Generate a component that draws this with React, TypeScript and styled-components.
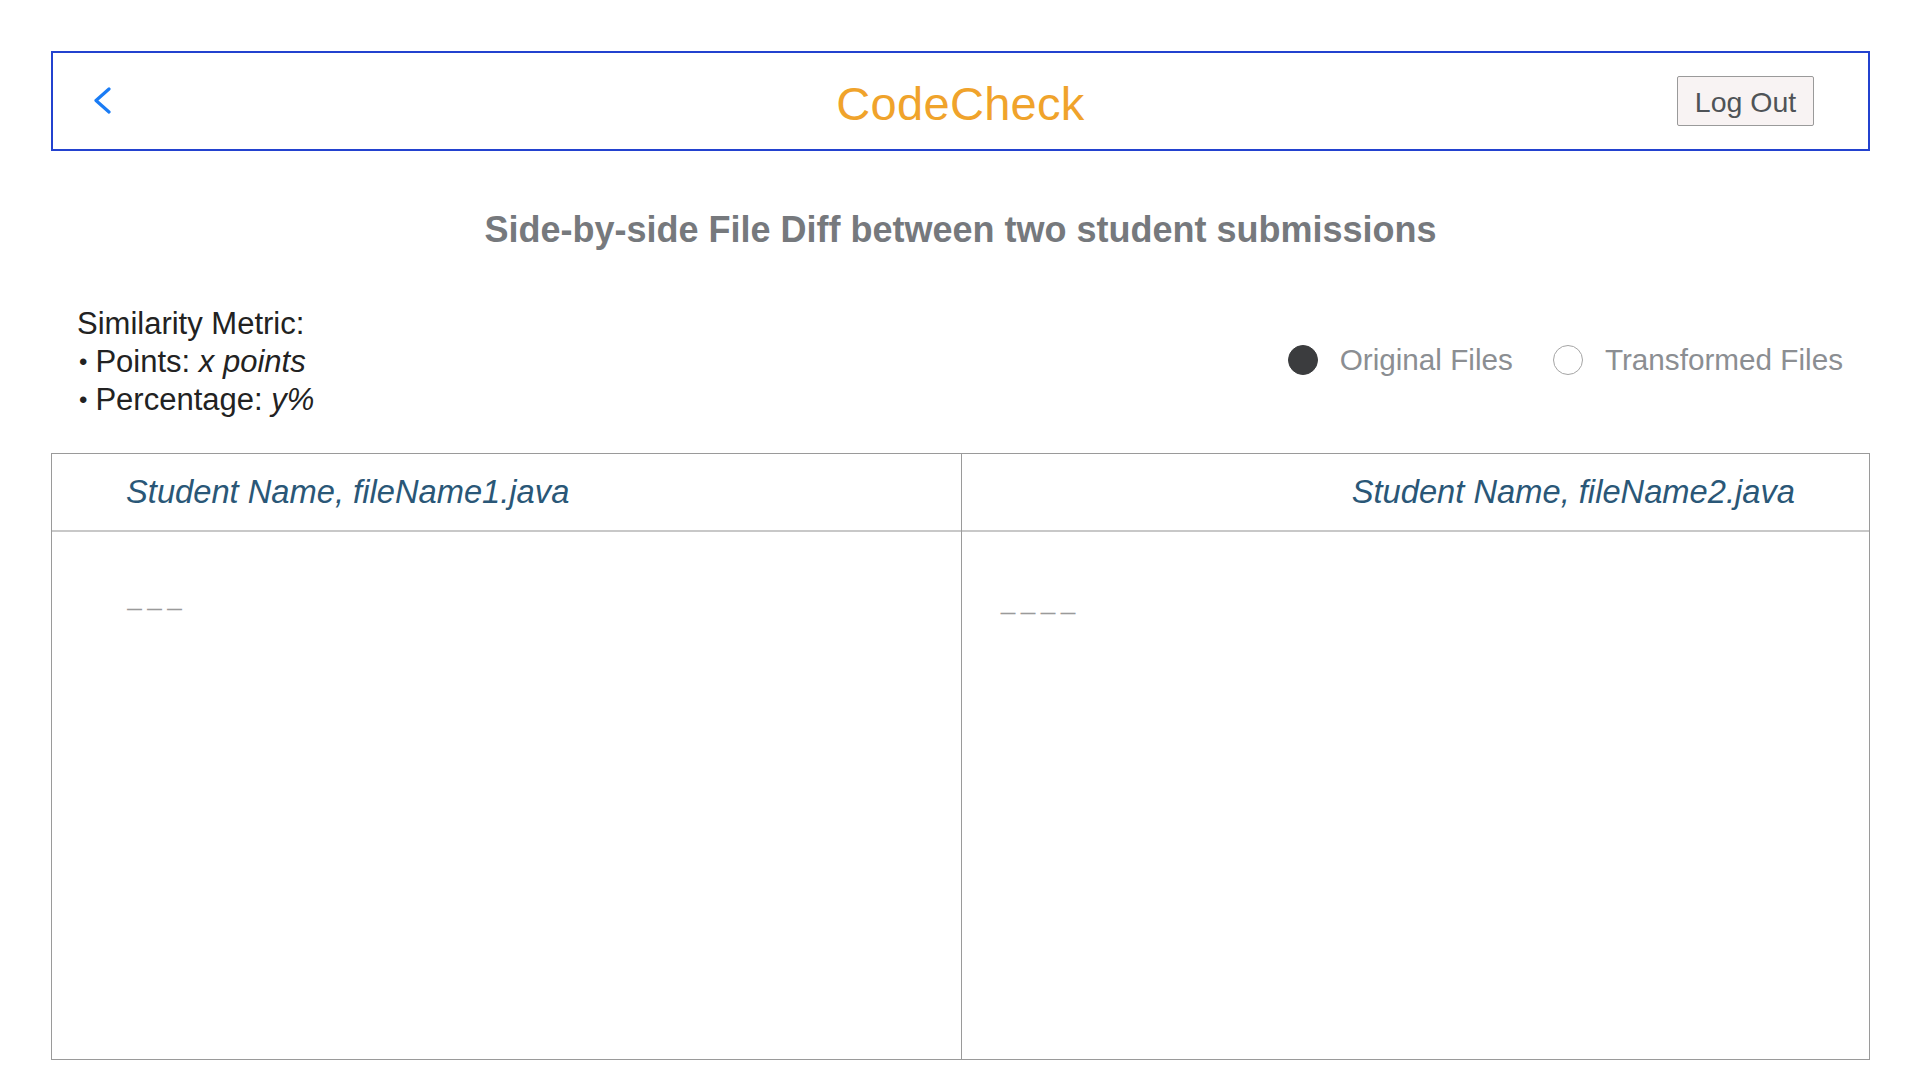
import React from "react";
import styled, { createGlobalStyle } from "styled-components";

const GlobalStyle = createGlobalStyle`
  html, body {
    margin: 0;
    padding: 0;
    background: #ffffff;
    font-family: "Liberation Sans", Arial, Helvetica, sans-serif;
  }
  * { box-sizing: border-box; }
`;

const Page = styled.div`
  width: 1920px;
  height: 1080px;
  padding: 51px 50px 0 51px;
  display: flex;
  flex-direction: column;
  overflow: hidden;
`;

const TopBar = styled.header`
  height: 100px;
  border: 2px solid #2342cf;
  display: grid;
  grid-template-columns: 1fr auto 1fr;
  align-items: center;
  padding: 0 54px 0 40px;
`;

const BackButton = styled.button`
  justify-self: start;
  background: none;
  border: none;
  padding: 0;
  width: 22px;
  height: 30px;
  display: flex;
  align-items: center;
  cursor: pointer;
`;

const Brand = styled.h1`
  margin: 0;
  padding: 4px 0 0 14px;
  font-size: 47px;
  font-weight: 400;
  color: #f0a32b;
  letter-spacing: 0.3px;
`;

const LogOut = styled.button`
  justify-self: end;
  width: 137px;
  height: 50px;
  background: #f8f3f3;
  border: 1px solid #9a9a9a;
  border-radius: 2px;
  font-family: "Liberation Sans", Arial, sans-serif;
  font-size: 28.5px;
  color: #4f5357;
  padding: 3px 0 0;
`;

const Subtitle = styled.h2`
  margin: 59px 0 0;
  text-align: center;
  font-size: 36px;
  line-height: 40px;
  font-weight: 700;
  color: #76797d;
`;

const InfoRow = styled.div`
  margin-top: 55px;
  display: flex;
  align-items: center;
  justify-content: space-between;
  padding: 0 27px 0 26px;
`;

const Metric = styled.div`
  font-size: 31px;
  line-height: 38px;
  color: #222;
`;

const MetricItem = styled.div`
  &::before {
    content: "•";
    margin: 0 8px 0 2px;
    font-size: 24px;
    vertical-align: 2px;
  }
  em {
    font-style: italic;
  }
`;

const RadioGroup = styled.div`
  display: flex;
  align-items: center;
  gap: 40px;
  margin-top: -5px;
`;

const RadioOption = styled.label`
  display: flex;
  align-items: center;
  gap: 22px;
  font-size: 29.7px;
  color: #8b8e92;
`;

const RadioDot = styled.span<{ $checked?: boolean }>`
  width: 30px;
  height: 30px;
  border-radius: 50%;
  background: ${(p) => (p.$checked ? "#3b3c3e" : "#ffffff")};
  border: 1px solid ${(p) => (p.$checked ? "#3b3c3e" : "#a5a5a5")};
`;

const DiffTable = styled.section`
  margin-top: 34px;
  height: 607px;
  border: 1px solid #9a9a9a;
  display: grid;
  grid-template-columns: 1fr 1fr;
`;

const Column = styled.div<{ $divider?: boolean }>`
  display: flex;
  flex-direction: column;
  border-left: ${(p) => (p.$divider ? "1px solid #9a9a9a" : "none")};
`;

const ColumnHeader = styled.div<{ $align: "left" | "right" }>`
  height: 78px;
  border-bottom: 2px solid #c8c8c8;
  display: flex;
  align-items: center;
  justify-content: ${(p) => (p.$align === "left" ? "flex-start" : "flex-end")};
  padding: 0 74px;
  font-size: 32.7px;
  font-style: italic;
  color: #2a5777;
`;

const ColumnBody = styled.div<{ $padLeft: number; $padTop: number }>`
  flex: 1;
  padding-left: ${(p) => p.$padLeft}px;
  padding-top: ${(p) => p.$padTop}px;
`;

const Placeholder = styled.span`
  font-size: 15px;
  letter-spacing: 5px;
  color: #9a9a9a;
  font-weight: 700;
`;

export default function App() {
  return (
    <>
      <GlobalStyle />
      <Page>
        <TopBar>
          <BackButton aria-label="Back">
            <svg width="20" height="28" viewBox="0 0 20 28">
              <polyline
                points="16,2 3,13.5 16,25"
                fill="none"
                stroke="#1a7cf5"
                strokeWidth="3.2"
                strokeLinecap="round"
                strokeLinejoin="round"
              />
            </svg>
          </BackButton>
          <Brand>CodeCheck</Brand>
          <LogOut>Log Out</LogOut>
        </TopBar>

        <Subtitle>Side-by-side File Diff between two student submissions</Subtitle>

        <InfoRow>
          <Metric>
            <div>Similarity Metric:</div>
            <MetricItem>
              Points: <em>x points</em>
            </MetricItem>
            <MetricItem>
              Percentage: <em>y%</em>
            </MetricItem>
          </Metric>
          <RadioGroup>
            <RadioOption>
              <RadioDot $checked />
              Original Files
            </RadioOption>
            <RadioOption>
              <RadioDot />
              Transformed Files
            </RadioOption>
          </RadioGroup>
        </InfoRow>

        <DiffTable>
          <Column>
            <ColumnHeader $align="left">Student Name, fileName1.java</ColumnHeader>
            <ColumnBody $padLeft={75} $padTop={68}>
              <Placeholder>———</Placeholder>
            </ColumnBody>
          </Column>
          <Column $divider>
            <ColumnHeader $align="right">Student Name, fileName2.java</ColumnHeader>
            <ColumnBody $padLeft={39} $padTop={72}>
              <Placeholder>————</Placeholder>
            </ColumnBody>
          </Column>
        </DiffTable>
      </Page>
    </>
  );
}
